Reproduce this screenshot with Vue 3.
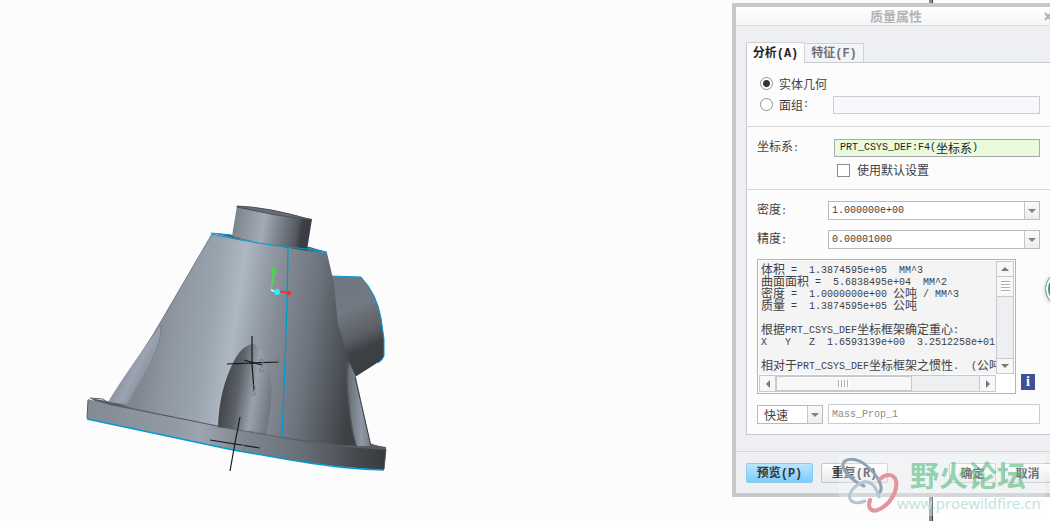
<script setup>
import { h, ref } from 'vue'

const MixedText = (props) =>
  (props.text.match(/[\u2e80-\uffef]+|[^\u2e80-\uffef]+/g) || []).map((run) =>
    h('span', { class: /[\u2e80-\uffef]/.test(run) ? 'han' : 'mono' }, run)
  )
MixedText.props = ['text']

const source = ref('solid')
const useDefault = ref(false)
const quilt = ref('')
const name = ref('Mass_Prop_1')

const report = [
  '体积 =  1.3874595e+05  MM^3',
  '曲面面积 =  5.6838495e+04  MM^2',
  '密度 =  1.0000000e+00 公吨 / MM^3',
  '质量 =  1.3874595e+05 公吨',
  '',
  '根据PRT_CSYS_DEF坐标框架确定重心:',
  'X   Y   Z  1.6593139e+00  3.2512258e+01',
  '',
  '相对于PRT_CSYS_DEF坐标框架之惯性.  (公吨'
]
</script>

<template>
  <main class="workspace">
    <svg class="model" width="400" height="521" viewBox="0 0 400 521" aria-label="三维模型">
      <defs>
        <linearGradient id="cone" gradientUnits="userSpaceOnUse" x1="148" y1="330" x2="358" y2="362">
          <stop offset="0" stop-color="#7f8791" />
          <stop offset=".12" stop-color="#8f98a2" />
          <stop offset=".28" stop-color="#9aa4ae" />
          <stop offset=".4" stop-color="#aeb8c2" />
          <stop offset=".5" stop-color="#959ea9" />
          <stop offset=".6" stop-color="#838a94" />
          <stop offset=".76" stop-color="#6c737c" />
          <stop offset=".9" stop-color="#50555b" />
          <stop offset="1" stop-color="#3c4044" />
        </linearGradient>
        <linearGradient id="neck" gradientUnits="userSpaceOnUse" x1="233" y1="225" x2="310" y2="237">
          <stop offset="0" stop-color="#7c838c" />
          <stop offset=".38" stop-color="#a3abb6" />
          <stop offset=".55" stop-color="#838a94" />
          <stop offset=".82" stop-color="#54595f" />
          <stop offset=".88" stop-color="#3d4145" />
          <stop offset="1" stop-color="#383b3f" />
        </linearGradient>
        <linearGradient id="pipe" x1="0" y1="0" x2=".25" y2="1">
          <stop offset="0" stop-color="#70767f" />
          <stop offset=".4" stop-color="#737982" />
          <stop offset=".68" stop-color="#5b6066" />
          <stop offset=".83" stop-color="#3e4246" />
          <stop offset="1" stop-color="#3b3e42" />
        </linearGradient>
        <linearGradient id="flange">
          <stop offset="0" stop-color="#838a94" />
          <stop offset=".3" stop-color="#929ba5" />
          <stop offset=".38" stop-color="#9ca4af" />
          <stop offset=".52" stop-color="#808790" />
          <stop offset=".72" stop-color="#696f77" />
          <stop offset=".9" stop-color="#45494e" />
          <stop offset="1" stop-color="#373a3e" />
        </linearGradient>
        <linearGradient id="pocket" gradientUnits="userSpaceOnUse" x1="222" y1="390" x2="273" y2="398">
          <stop offset="0" stop-color="#414549" />
          <stop offset=".3" stop-color="#5c6168" />
          <stop offset=".62" stop-color="#98a1ab" />
          <stop offset=".8" stop-color="#858c96" />
          <stop offset="1" stop-color="#6c727b" />
        </linearGradient>
        <linearGradient id="scoop" gradientUnits="userSpaceOnUse" x1="119" y1="365" x2="153" y2="383">
          <stop offset="0" stop-color="#7f8791" />
          <stop offset=".45" stop-color="#9ba4b1" />
          <stop offset="1" stop-color="#7d858e" />
        </linearGradient>
        <linearGradient id="rib">
          <stop offset="0" stop-color="#656b73" />
          <stop offset=".6" stop-color="#8f98a5" />
          <stop offset="1" stop-color="#737a84" />
        </linearGradient>
      </defs>

      <path d="M90 398 L95 399 L386 447 L386 450 L340 452 L108 410 Z" fill="#575c63" />
      <path d="M88 399 L110 405 L150 413 L220 427 L300 441 L345 447 L386 450 L384 470 Q330 467 285 459 L233 450 L87 419 Z" fill="url(#flange)" />
      <path d="M90 398 L103 399 L111 405 L132 408 L144 411 L220 426 L282 437 L355 446 L386 449 L371 444" fill="none" stroke="#5a5f66" />

      <path d="M327 276 L361 277 Q377 294 381 318 L384 339 V356 Q382 361 377 363 L355 377 L334 352 Z" fill="url(#pipe)" />
      <path d="M331 276 L361 277 Q377 294 381 318 L384 339 V356 Q382 361 378 363" fill="none" stroke="#0099d4" />

      <path d="M212 234 L327 253 L334 283 L338 325 L355 377 L370 446 L340 445 L282 437 L220 426 L132 408 L110 401 L153 335 Z" fill="url(#cone)" />
      <path d="M212 234 L153 335 L109 402" fill="none" stroke="#737a82" />
      <path d="M108 402 Q126 372 160 327 Q162 340 152 360 L127 404 Z" fill="url(#scoop)" />
      <path d="M161 326 Q162 341 151 361" fill="none" stroke="#7a818b" />
      <path d="M349 362 Q346 377 349 400 Q352 432 357 446 L371 446 L356 377 Z" fill="url(#rib)" />
      <path d="M347 362 Q346 376 348 400 Q351 430 356 445" fill="none" stroke="#545a60" />
      <path d="M355 377 L371 446" fill="none" stroke="#3e4247" />

      <path d="M218 427 Q219 390 234 361 Q243 344 254 344 Q268 350 271 382 Q273 403 266 434 L240 430 Z" fill="url(#pocket)" />
      <path d="M218 427 L245 431 L266 434" fill="none" stroke="#63686f" stroke-dasharray="7 3" />

      <path d="M212 233 L234 235 L310 247 L326 252 L306 251 L233 238 Z" fill="#555b62" />
      <path d="M237 206 L312 219 L307 250 Q266 246 232 236 Z" fill="url(#neck)" />
      <path d="M237 206 Q268 207 312 220 Q275 216 237 207 Z" fill="#686e76" stroke="#4b5056" />
      <path d="M211 233 L231 235 M211 234 Q260 245 307 249 L327 253 M307 248 L327 252" fill="none" stroke="#0099d4" />
      <path d="M288 248 L287 304 L285 362 L282 437" fill="none" stroke="#0099d4" stroke-width="1.3" />
      <path d="M87 419 L233 450 L285 459 Q340 469 384 470" fill="none" stroke="#0099d4" stroke-width="1.3" />
      <path d="M88 400 L87 418 M386 449 L384 469" stroke="#53595f" />

      <g fill="none" stroke="#17191b" stroke-width="1.2">
        <path d="M252 336 V364 L254 390 M227 364 L279 362 M244 360 L262 365" />
        <path d="M240 417 L235 443 L230 471 M210 440 L260 448" />
      </g>
      <g fill="none" stroke="#777a7d">
        <path d="M259 362 Q260 358 263 360 Q265 363 259 371 H264 M278 356 V366" />
        <path d="M251 386 Q256 383 255 389 Q255 392 252 391 Q256 392 255 395 Q253 396 251 394" />
        <path d="M241 446 L244 444 V451 M260 446 V453" />
      </g>
      <path d="M274 271 L271 290" stroke="#3fe83a" stroke-width="1.4" />
      <path d="M271 290 L277 292" stroke="#e8f5fa" stroke-width="1.4" />
      <path d="M277 291 L289 293" stroke="#f02c32" stroke-width="1.5" />
      <circle cx="274" cy="271" r="2.6" fill="#36e829" />
      <circle cx="289" cy="293" r="2.3" fill="#e8373c" />
      <circle cx="277" cy="292" r="3" fill="#2cf0f5" />
    </svg>

    <div class="side-pane"></div>

    <section class="dialog" aria-label="质量属性">
      <header class="titlebar">
        <h1>质量属性</h1>
        <button class="close" type="button" aria-label="关闭">
          <svg width="9" height="9" viewBox="0 0 9 9"><path d="M1 1 L7 8 M7 1 L1 8" stroke="#aeb0b3" stroke-width="2" /></svg>
        </button>
      </header>

      <div class="body">
        <nav class="tabs" role="tablist">
          <button class="tab active" type="button" role="tab" aria-selected="true"><MixedText text="分析(A)" /></button>
          <button class="tab" type="button" role="tab" aria-selected="false"><MixedText text="特征(F)" /></button>
        </nav>

        <div class="panel">
          <div class="group geometry">
            <label class="choice"><input v-model="source" type="radio" value="solid" name="source" />实体几何</label>
            <div class="row">
              <label class="choice"><input v-model="source" type="radio" value="quilt" name="source" /><MixedText text="面组:" /></label>
              <input v-model="quilt" class="field quilt" type="text" aria-label="面组" />
            </div>
          </div>

          <div class="group csys">
            <div class="row">
              <label class="caption wide" for="csys"><MixedText text="坐标系:" /></label>
              <button id="csys" class="field collector" type="button"><MixedText text="PRT_CSYS_DEF:F4(坐标系)" /></button>
            </div>
            <label class="check"><input v-model="useDefault" type="checkbox" />使用默认设置</label>
          </div>

          <div class="group values">
            <div class="row">
              <label class="caption" for="density"><MixedText text="密度:" /></label>
              <div class="combo"><select id="density"><option>1.000000e+00</option></select></div>
            </div>
            <div class="row">
              <label class="caption" for="accuracy"><MixedText text="精度:" /></label>
              <div class="combo"><select id="accuracy"><option>0.00001000</option></select></div>
            </div>

            <div class="result">
              <div class="report">
                <div class="lines">
                  <div v-for="(line, i) in report" :key="i" class="line"><MixedText :text="line" /></div>
                </div>
                <div class="bar vertical">
                  <button type="button" aria-label="向上滚动"><svg width="8" height="4"><path d="M0 4 L4 0 L8 4Z" /></svg></button>
                  <div class="thumb"><i></i></div>
                  <button class="end" type="button" aria-label="向下滚动"><svg width="8" height="4"><path d="M0 0 L4 4 L8 0Z" /></svg></button>
                </div>
                <div class="bar horizontal">
                  <button type="button" aria-label="向左滚动"><svg width="4" height="8"><path d="M4 0 L0 4 L4 8Z" /></svg></button>
                  <div class="thumb"><i></i></div>
                  <button class="end" type="button" aria-label="向右滚动"><svg width="4" height="8"><path d="M0 0 L4 4 L0 8Z" /></svg></button>
                </div>
              </div>
              <button class="info" type="button" aria-label="信息">i</button>
            </div>

            <div class="row save">
              <div class="combo mode"><select aria-label="分析类型"><option>快速</option></select></div>
              <input v-model="name" class="field name" type="text" aria-label="名称" />
            </div>
          </div>
        </div>
      </div>

      <footer class="actions">
        <button class="action primary" type="button"><MixedText text="预览(P)" /></button>
        <button class="action" type="button"><MixedText text="重复(R)" /></button>
        <span class="spacer"></span>
        <button class="action short" type="button">确定</button>
        <button class="action short last" type="button">取消</button>
      </footer>
    </section>

    <div class="badge"></div>

    <div class="watermark">
      <svg width="62" height="62" viewBox="0 0 62 62" fill="none" stroke-linecap="round">
        <path d="M39 39 C46 37 41 24 29 13 C17 2 3 4 4 12 C5 19 15 28 25 32" stroke="#8fa3b6" stroke-width="3" />
        <path d="M40 43 C37 32 32 27 25 28 C15 31 9 39 11 45 C13 49 19 50 26 47" stroke="#b5c6d3" stroke-width="3" />
        <path d="M41 25 C47 20 55 19 57 27 C59 37 51 50 41 55 C33 59 28 55 31 46" stroke="#e2959b" stroke-width="4" />
      </svg>
      <div class="brand">
        <strong>野火论坛</strong>
        <span>www.proewildfire.cn</span>
      </div>
    </div>
  </main>
</template>

<style>
body {
  margin: 0;
}
.han {
  font-size: 12px;
}
.mono {
  font-family: "Liberation Mono", monospace;
  font-size: 10px;
  white-space: pre;
}
.line .mono {
  vertical-align: 1px;
}
.tab .mono,
.action .mono {
  font-size: 12px;
}
</style>

<style scoped>
* {
  box-sizing: border-box;
}
.workspace {
  position: relative;
  min-height: 100vh;
  overflow: hidden;
  background: #fcfcfc;
  color: #3f4144;
  font: 12px/16px "Noto Sans CJK SC", sans-serif;
}
.model {
  display: block;
}
button,
input,
select {
  margin: 0;
  padding: 0;
  color: inherit;
  font: inherit;
}
.side-pane {
  position: absolute;
  top: 0;
  right: 0;
  bottom: 0;
  width: 121px;
  border-left: 3px solid #8f9092;
  background: #fff;
  box-shadow: inset 1px 0 #3c3c3e;
}
.dialog {
  position: absolute;
  top: 3px;
  right: -15px;
  width: 333px;
  border: 4px solid #c5c9cc;
  background: #eeeff2;
}
.titlebar {
  display: flex;
  align-items: center;
  height: 19px;
  padding-right: 8px;
  border-bottom: 1px solid #d7d9db;
  background: linear-gradient(#fff, #f5f5f6);
}
h1 {
  flex: 1;
  margin: 0;
  padding-left: 12px;
  color: #b4b5b7;
  font-size: 13px;
  line-height: 18px;
  text-align: center;
}
.close {
  display: flex;
  border: 0;
  background: none;
}
.body {
  padding: 16px 10px;
}
.tabs {
  display: flex;
  align-items: flex-end;
}
.tab {
  width: 59px;
  height: 19px;
  border: 1px solid #cfd1d4;
  border-bottom: 0;
  border-left: 0;
  background: #f3f4f5;
  color: #6f6f76;
  font-weight: bold;
}
.tab.active {
  height: 21px;
  margin-bottom: -1px;
  border-left: 1px solid #c4c8cb;
  border-radius: 2px 2px 0 0;
  background: #fcfcfc;
  color: #222426;
}
.panel {
  border: 1px solid #c8cbce;
  background: #fcfcfc;
}
.group {
  padding: 11px 10px;
}
.group + .group {
  border-top: 1px solid #d6d7d8;
}
.row {
  display: flex;
  align-items: center;
}
.geometry {
  padding: 11px 10px 10px 13px;
}
.choice,
.check {
  display: flex;
  align-items: center;
}
.choice {
  width: 73px;
  height: 19px;
}
.geometry .row {
  height: 23px;
}
.choice input {
  appearance: none;
  flex: none;
  width: 13px;
  height: 13px;
  margin-right: 6px;
  border: 1px solid #8f9193;
  border-radius: 50%;
  background: #fff;
}
.choice input:checked {
  background: radial-gradient(circle, #333 0 3px, #fff 4px);
}
.field {
  flex: 1;
  min-width: 0;
  height: 18px;
  border: 1px solid #cbcdd2;
  background: #fff;
}
.quilt {
  background: #f9f7fe;
}
.csys {
  padding-bottom: 11px;
}
.caption {
  width: 71px;
}
.caption.wide {
  width: 77px;
}
.collector {
  display: flex;
  align-items: center;
  padding-left: 5px;
  border-color: #a9acaf;
  background: #eafbdc;
  color: #222;
}
.check {
  height: 16px;
  margin: 5px 0 0 80px;
}
.check input {
  appearance: none;
  width: 13px;
  height: 13px;
  margin-right: 7px;
  border: 1px solid #8b8d90;
  background: #fff;
}
.combo {
  position: relative;
  flex: 1;
  height: 19px;
}
.combo select {
  appearance: none;
  display: block;
  width: 100%;
  height: 100%;
  padding-left: 3px;
  border: 1px solid #b9bcbf;
  border-radius: 0;
  background: #fff;
  font: 10px "Liberation Mono", monospace;
}
.combo::after {
  content: "";
  position: absolute;
  inset: 1px 1px 1px auto;
  width: 14px;
  border-left: 1px solid #c4c7c9;
  background: linear-gradient(#fafafa, #ecedef);
  pointer-events: none;
}
.combo::before {
  content: "";
  position: absolute;
  z-index: 1;
  top: 8px;
  right: 4px;
  border: 4px solid transparent;
  border-top-color: #808386;
  border-bottom: 0;
  pointer-events: none;
}
.values {
  display: grid;
  gap: 10px;
  padding-bottom: 10px;
}
.result {
  display: flex;
  align-items: flex-end;
  gap: 5px;
}
.report {
  display: grid;
  grid-template-columns: minmax(0, 1fr) 18px;
  grid-template-rows: 113px 17px;
  width: 259px;
  height: 135px;
  padding: 1px;
  row-gap: 1px;
  border: 1px solid #b2b5b8;
  background: #fff;
}
.lines {
  overflow: hidden;
  padding: 2px 0 0 2px;
  background: #f4f4f4;
}
.line {
  height: 12px;
  line-height: 12px;
  white-space: pre;
}
.bar {
  display: flex;
  border: 1px solid #c6cacc;
  background: #eeeff2;
}
.vertical {
  flex-direction: column;
}
.bar button,
.thumb {
  display: flex;
  flex: none;
  align-items: center;
  justify-content: center;
  width: 16px;
  height: 15px;
  border: 0 solid #c6cacc;
  background: #f7f7f8;
}
.vertical button {
  border-bottom-width: 1px;
}
.vertical .end {
  border-width: 1px 0 0;
}
.horizontal button {
  border-right-width: 1px;
}
.horizontal .end {
  border-width: 0 0 0 1px;
}
.bar .end {
  margin-top: auto;
}
.horizontal .end {
  margin: 0 0 0 auto;
}
.bar svg {
  fill: #77797c;
}
.vertical .thumb {
  height: 20px;
  border-bottom-width: 1px;
}
.horizontal .thumb {
  width: 136px;
  border: 1px solid #c6cacc;
}
.thumb i {
  width: 9px;
  height: 12px;
  background: repeating-linear-gradient(#adb0b3 0 1px, #fff 1px 3px);
}
.horizontal i {
  width: 12px;
  height: 7px;
  background: repeating-linear-gradient(90deg, #adb0b3 0 1px, #fff 1px 3px);
}
.info {
  width: 14px;
  height: 16px;
  margin-bottom: 4px;
  border: 0;
  background: #3e5096;
  color: #fff;
  font: bold 14px/16px "Liberation Serif", serif;
}
.save {
  gap: 5px;
}
.combo.mode {
  flex: none;
  width: 66px;
}
.combo.mode select {
  padding-left: 6px;
  font: 12px "Noto Sans CJK SC", sans-serif;
}
.name {
  height: 20px;
  padding-left: 3px;
  color: #8b8c8e;
  font: 10px "Liberation Mono", monospace;
}
.actions {
  display: flex;
  gap: 8px;
  padding: 11px 10px 10px;
  border-top: 1px solid #d3d5d8;
}
.action {
  width: 67px;
  height: 20px;
  border: 1px solid #c4c6c9;
  border-radius: 2px;
  background: linear-gradient(#fff, #e8e9eb);
  color: #36383b;
  font-weight: bold;
}
.action.primary {
  border-color: #8bcdf1;
  background: linear-gradient(#b9e5ff, #7dccfb);
}
.action.short {
  width: 47px;
}
.spacer {
  flex: 1;
}
.badge {
  position: absolute;
  top: 271px;
  right: -31px;
  width: 36px;
  height: 36px;
  border: 1px solid #9c9ea0;
  border-radius: 50%;
  background: #22a857;
  box-shadow: inset 0 0 0 2px #fff, 0 1px 4px #ccc;
}
.watermark {
  position: absolute;
  top: 454px;
  right: 5px;
  display: flex;
  width: 206px;
  height: 62px;
  background: rgba(252, 252, 252, 0.3);
  pointer-events: none;
}
.watermark svg {
  flex: none;
}
.brand {
  display: flex;
  flex-direction: column;
  margin-left: -4px;
}
.brand strong {
  padding-left: 13px;
  color: rgba(92, 190, 130, 0.65);
  font-size: 29px;
  line-height: 40px;
}
.brand span {
  color: #c4e2e0;
  font: 15px/18px "Noto Sans", sans-serif;
}
</style>
